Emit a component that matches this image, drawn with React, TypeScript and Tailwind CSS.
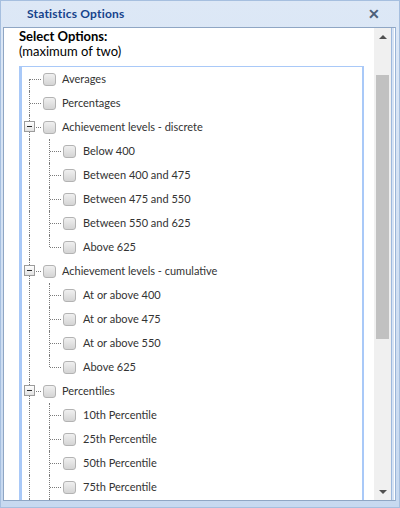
import React from 'react';

type Node = { label: string; children?: string[] };

const tree: Node[] = [
  { label: 'Averages' },
  { label: 'Percentages' },
  {
    label: 'Achievement levels - discrete',
    children: ['Below 400', 'Between 400 and 475', 'Between 475 and 550', 'Between 550 and 625', 'Above 625'],
  },
  {
    label: 'Achievement levels - cumulative',
    children: ['At or above 400', 'At or above 475', 'At or above 550', 'Above 625'],
  },
  {
    label: 'Percentiles',
    children: ['10th Percentile', '25th Percentile', '50th Percentile', '75th Percentile', '90th Percentile'],
  },
];

const dot = 'border-dotted border-[#7a7a7a]';

function Box() {
  return (
    <div className="w-[13px] h-[13px] shrink-0 rounded-[3px] border border-[#b3b3b3] bg-gradient-to-b from-[#f0f0f0] to-[#d4d4d4]" />
  );
}

function Expander() {
  return (
    <div className="w-[11px] h-[11px] flex items-center justify-center border border-[#9c9c9c] bg-gradient-to-b from-white to-[#e2e2e2]">
      <div className="w-[5px] h-px bg-[#2a2a2a]" />
    </div>
  );
}

// top level row: guide line, stub, checkbox, label
function Row({ label, first, expander }: { label: string; first?: boolean; expander?: boolean }) {
  return (
    <div className="flex h-6 items-center">
      <div className="relative w-[8px] h-full shrink-0">
        <div
          className={
            first
              ? `w-[8px] h-[12px] mt-[12px] border-r ${dot}`
              : `w-[8px] h-full border-r ${dot}`
          }
        />
        {expander && (
          <div className="absolute left-[2px] top-[6px]">
            <Expander />
          </div>
        )}
      </div>
      <div className={`w-[11px] h-0 border-t ${dot}`} />
      <div className="ml-[2px]">
        <Box />
      </div>
      <span className="ml-[6px] text-[11px] text-[#333]">{label}</span>
    </div>
  );
}

function ChildRow({ label, last }: { label: string; last?: boolean }) {
  return (
    <div className="flex h-6 items-center">
      <div className={`w-[8px] h-full shrink-0 border-r ${dot}`} />
      <div
        className={
          last
            ? `w-[20px] h-[12px] self-start shrink-0 border-r ${dot}`
            : `w-[20px] h-full shrink-0 border-r ${dot}`
        }
      />
      <div className={`w-[11px] h-0 border-t ${dot}`} />
      <div className="ml-[2px]">
        <Box />
      </div>
      <span className="ml-[7px] text-[11px] text-[#333]">{label}</span>
    </div>
  );
}

export default function App() {
  return (
    <div
      className="w-[400px] h-[508px] flex flex-col overflow-hidden bg-gradient-to-b from-[#dde8f6] to-[#c7d9f0] border border-[#a6bfdf]"
      style={{ fontFamily: 'Lato, "Noto Sans", sans-serif' }}
    >
      <div className="h-[26px] shrink-0 flex items-center justify-between pl-[26px] pr-[19px]">
        <span className="text-[12px] font-bold text-[#15428b] tracking-[0.2px]">Statistics Options</span>
        <span className="text-[14px] font-black text-[#4d5f7a] leading-none">✕</span>
      </div>
      <div className="flex-1 min-h-0 pl-[2px] pr-[3px] pb-[6px]">
        <div className="h-full flex border border-[#8fa6c4] border-r-[#99b3d6] pr-px bg-white">
          <div className="flex-1 min-h-0 min-w-0 overflow-hidden pl-[15px] pr-[10px] pt-px">
            <div className="text-[13px] leading-[15px] text-black">
              <div className="font-bold">Select Options:</div>
              <div>(maximum of two)</div>
            </div>
            <div className="mt-[7px] h-[600px] border-2 border-t border-[#a9c9f8] border-l-[3px]">
              {tree.map((n, i) => (
                <div key={n.label}>
                  <Row label={n.label} first={i === 0} expander={!!n.children} />
                  {n.children?.map((c, j) => (
                    <ChildRow key={c} label={c} last={j === n.children!.length - 1} />
                  ))}
                </div>
              ))}
            </div>
          </div>
          <div className="w-[17px] shrink-0 flex flex-col items-center bg-[#f0f0f0]">
            <div className="h-[17px] flex items-center justify-center">
              <div className="w-0 h-0 border-x-[4px] border-x-transparent border-b-[4px] border-b-[#505050]" />
            </div>
            <div className="flex-1 w-full px-[2px] pt-[30px] pb-[144px]">
              <div className="h-full bg-[#c1c1c1]" />
            </div>
            <div className="h-[17px] flex items-center justify-center">
              <div className="w-0 h-0 border-x-[4px] border-x-transparent border-t-[4px] border-t-[#505050]" />
            </div>
          </div>
          <div className="w-[3px] shrink-0 bg-[#d5e2f3] border-l border-[#9db8dd]" />
        </div>
      </div>
    </div>
  );
}
